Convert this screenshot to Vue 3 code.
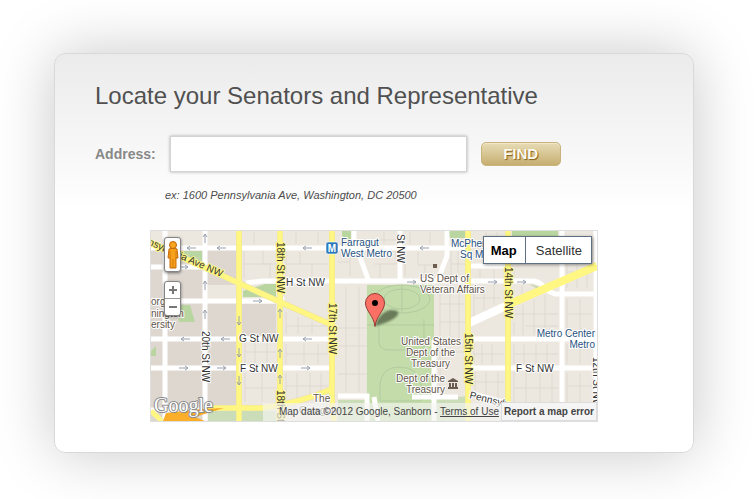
<script setup>
import { ref } from 'vue'

const address = ref('')
const mapType = ref('map')

const whiteRoads = [
  'M165 231V421', 'M205 231V421', 'M400 231V282', 'M354 231V240L369 282',
  'M447 231V256L437 282', 'M562 231V421', 'M596 231V421',
  'M151 248H470', 'M151 267H205', 'M151 301H276L284 298', 'M246 283L262 281H534Q541 282 548 291L555 294H597',
  'M151 339H332', 'M151 368H332', 'M470 339H597', 'M470 368H597',
  'M470 266H508', 'M338 396H367V421', 'M434 340V421', 'M374 397L378 421',
  'M412 397H458', 'M470 393L520 407H597', 'M151 410H212',
]
const yellowRoads = [
  'M239 231V421', 'M280 231V421', 'M332 231V382Q331 398 334 421', 'M468 231V421', 'M508 231V421',
  'M151 243L280 302L332 325', 'M205 408H262Q300 403 332 389',
]
const parcels = [
  'M212 251V278H235', 'M222 251V260H235', 'M178 252V264', 'M188 252V258H200', 'M244 251V278M254 232V244M263 251V264H276M244 264H270V278',
  'M286 252V276M300 252V264H328M312 264V276M286 264H300M318 232V244M296 232V244',
  'M338 251H350V276M338 262H350M346 287V392M338 328H367M338 346H367M338 374H367M359 287V392',
  'M372 251H396V264H374M380 264V278M384 232V244M372 240H396',
  'M405 252V276M418 252V265H438M425 265V278M410 232V244M430 232V244',
  'M451 251V278M458 251V278M451 264H465M440 287V392M450 287V338M459 287V338M440 304H465M440 322H465M440 352H465',
  'M474 286V316M484 286V310M494 270V304M474 298H500M480 270V278M486 232V262M497 232V262',
  'M514 270V278M522 286V296M535 286V290M514 322V335M523 305V335M534 300V335M545 295V335M514 314H558M526 326H558',
  'M474 344V364M482 344V364M492 344V364M474 354H504M514 344V364M524 344V364M536 344V364M547 344V364M514 354H558',
  'M475 372V390M486 372V394M498 372V398M475 382H504M514 372V402M526 372V402M540 372V402M552 372V402M514 388H558',
  'M567 252V288M577 252V288M587 274V288M567 272H592M567 299V335M580 299V335M567 314H592M567 344V364M580 344V364M567 373V402M580 373V402M567 386H592',
  'M245 305V334H276M255 310V334M265 314V334M245 322H276M245 343V363M255 343V363M267 343V363M245 352H276',
  'M286 312V334M298 317V334M312 322V334M286 326H328M286 344V364M304 344V364M318 344V364M286 354H328',
  'M286 373V402M297 373V402M310 373V396M321 373V390M286 386H328M245 373V402M262 373V402M245 388H276',
]
const arrows = [
  [191, 248, 180], [221, 248, 180], [184, 267, 0], [258, 301, 0], [307, 248, 180], [424, 248, 180],
  [412, 282, 0], [493, 282, 0], [522, 282, 0], [185, 339, 180], [225, 339, 180], [184, 368, 0],
  [222, 368, 0], [307, 339, 180], [306, 368, 0], [205, 238, 270], [205, 285, 270], [205, 314, 270],
  [239, 321, 90], [239, 353, 90], [239, 381, 90], [280, 313, 270], [280, 353, 270], [280, 379, 270],
]
</script>

<template>
  <main class="page">
    <section class="card">
      <h1>Locate your Senators and Representative</h1>
      <form class="search" @submit.prevent>
        <label for="address">Address:</label>
        <input id="address" v-model="address" type="text" />
        <button type="submit" class="find">FIND</button>
      </form>
      <p class="hint">ex: 1600 Pennsylvania Ave, Washington, DC 20500</p>

      <div class="map">
        <svg class="tiles" viewBox="151 231 446 190" role="img" aria-label="Street map">
          <rect x="151" y="231" width="446" height="190" fill="#ece7df" />
          <path fill="#ddd7d0" d="M151 248H205V421H151zM205 248H239V285H205zM205 301H239V405H205zM239 304H276V336H239z" />
          <g fill="#b9d6a0">
            <path d="M367 285H434V421H367z" fill="#c3dcaa" />
            <path d="M338 400H365V421H338zM208 411H276V421H208zM434 399L470 396V421H434z" fill="#cbdcb8" />
            <path d="M512 231H558V238H512zM243 297V291L265 284H276V297zM180 251H202V262L180 254zM178 305H190L195 322H179zM151 351L156 346V356H151zM342 231H351V244L342 236zM529 284L550 290H540zM448 231H465V238H450z" />
          </g>
          <path v-for="d in parcels" :key="d" :d="d" class="parcel" />
          <g fill="none" stroke="#b2cb9f">
            <ellipse cx="402" cy="299" rx="28" ry="14" />
            <ellipse cx="402" cy="299" rx="18" ry="10" />
            <path d="M379 319V343Q380 350 390 350H424V319M380 384Q382 367 399 367Q418 367 421 384V401H380zM402 285V312M367 325H434" />
          </g>
          <path v-for="d in whiteRoads" :key="d" :d="d" class="road" />
          <path d="M469 323L508 305" class="road wide" />
          <path v-for="d in yellowRoads" :key="d" :d="d" class="avenue edge" />
          <path v-for="d in yellowRoads" :key="d + 'f'" :d="d" class="avenue" />
          <path d="M507 305L597 266" class="avenue wide" />
          <path d="M151 411L162 421" class="avenue" />
          <path fill="#fbae29" d="M163 421L166 413L201 409L224 408L195 417L205 421z" />
          <path v-for="(a, i) in arrows" :key="i" class="arrow" d="M-5 0H4M1 -2L4 0L1 2" :transform="`translate(${a[0]} ${a[1]}) rotate(${a[2]})`" />

          <g class="street">
            <text class="penn" transform="translate(221 277) rotate(24)" text-anchor="end">nsylvania Ave NW</text>
            <g class="on-yellow">
              <text transform="translate(277 242) rotate(90)">18th St NW</text>
              <text transform="translate(329 303) rotate(90)">17th St NW</text>
              <text transform="translate(465 333) rotate(90)">15th St NW</text>
              <text transform="translate(505 267) rotate(90)">14th St NW</text>
              <text transform="translate(277 390) rotate(90)">18th St</text>
            </g>
            <text transform="translate(202 331) rotate(90)">20th St NW</text>
            <text transform="translate(397 234) rotate(90)">St NW</text>
            <text transform="translate(593 357) rotate(90)">12th St NW</text>
            <text x="286" y="286">H St NW</text>
            <text x="239" y="342">G St NW</text>
            <text x="240" y="372">F St NW</text>
            <text x="516" y="372">F St NW</text>
            <text transform="translate(469 398) rotate(14)">Pennsylvania</text>
          </g>
          <g class="place">
            <text x="151" y="305">org</text>
            <text x="151" y="317">nington</text>
            <text x="151" y="328">ersity</text>
            <text x="420" y="282">US Dept of</text>
            <text x="420" y="293">Veteran Affairs</text>
            <g text-anchor="end">
              <text x="461" y="345">United States</text>
              <text x="455" y="356">Dept of the</text>
              <text x="450" y="367">Treasury</text>
              <text x="445" y="382">Dept of the</text>
              <text x="445" y="393">Treasury</text>
            </g>
            <text x="313" y="402">The</text>
            <text x="299" y="414">Octagon</text>
          </g>
          <g class="metro">
            <text x="341" y="246">Farragut</text>
            <text x="341" y="257">West Metro</text>
            <text x="451" y="247">McPherson</text>
            <text x="460" y="258">Sq Metro</text>
            <text x="595" y="337" text-anchor="end">Metro Center</text>
            <text x="595" y="348" text-anchor="end">Metro</text>
          </g>
          <rect x="326" y="242" width="12" height="12" rx="2" fill="#2b78bd" stroke="#fff" stroke-width=".6" />
          <text x="332" y="252" text-anchor="middle" class="station">M</text>
          <rect x="433" y="264" width="4" height="4" fill="#6d5c50" />
          <path d="M448 381L453 378L458 381V382H448zM449 383H451V387H449zM452 383H454V387H452zM455 383H457V387H455zM448 387H458V389H448z" fill="#6a5c51" />

          <defs>
            <filter id="soft" x="-20%" y="-40%" width="140%" height="180%"><feGaussianBlur stdDeviation="1" /></filter>
          </defs>
          <path d="M375 326Q379 312 391 310Q401 310 397 316Q391 322 375 326z" fill="#344028" fill-opacity=".62" filter="url(#soft)" />
          <path d="M375 326.5C374 316 365.500 311 365.500 303A9.500 9.500 0 0 1 384.500 303C384.500 311 376 316 375 326.500z" fill="#fb7064" stroke="#963a34" />
          <circle cx="375" cy="303" r="3" />
          <text x="154" y="412" class="logo">Google</text>
          <path d="M263 403H597V421H263z" fill="#f5f5f2" fill-opacity=".65" />
        </svg>

        <button type="button" class="control pegman" aria-label="Street View">
          <svg viewBox="0 0 16 32" width="16" height="32">
            <path d="M4 10Q8 8 12 10L13 19H11V29H5V19H3z" fill="#f7a01b" stroke="#c56a08" />
            <path d="M8 20V29M5 12V19M11 12V19" stroke="#c56a08" stroke-width=".7" />
            <circle cx="8" cy="6" r="3.500" fill="#f9a51e" stroke="#b9670b" />
          </svg>
        </button>
        <div class="control zoom">
          <button type="button" aria-label="Zoom in"><svg viewBox="0 0 8 8" width="8" height="8"><path d="M0 4H8M4 0V8" /></svg></button>
          <button type="button" aria-label="Zoom out"><svg viewBox="0 0 8 8" width="8" height="8"><path d="M0 4H8" /></svg></button>
        </div>
        <div class="types">
          <button type="button" :class="{ active: mapType === 'map' }" @click="mapType = 'map'">Map</button>
          <button type="button" :class="{ active: mapType === 'satellite' }" @click="mapType = 'satellite'">Satellite</button>
        </div>
        <div class="credits">
          <span>Map data ©2012 Google, Sanborn - <a href="#">Terms of Use</a></span>
          <a href="#" class="report">Report a map error</a>
        </div>
      </div>
    </section>
  </main>
</template>

<style>
body {
  margin: 0;
  background: #fff;
}
</style>

<style scoped>
.page {
  padding: 53px 61px 46px 54px;
  overflow: hidden;
  font-family: "Liberation Sans", Arial, sans-serif;
}
.card {
  padding: 28px 40px 30px;
  border: 1px solid #d9d9d9;
  border-radius: 11px;
  background: linear-gradient(#ebebeb, #fff 158px);
  box-shadow: 0 0 60px rgba(0, 0, 0, 0.22);
}
h1 {
  margin: 0;
  font-size: 24px;
  line-height: 28px;
  font-weight: 400;
  color: #505050;
}
.search {
  display: flex;
  align-items: center;
  gap: 14px;
  margin-top: 26px;
}
.search label {
  font-size: 14px;
  font-weight: 700;
  color: #888;
}
.search input {
  box-sizing: border-box;
  flex: 0 1 297px;
  min-width: 0;
  height: 36px;
  padding: 0 8px;
  border: 1px solid #d3d3d3;
  background: #fff;
  box-shadow: 0 0 3px rgba(0, 0, 0, 0.3);
  font: 16px "Liberation Sans", Arial, sans-serif;
}
.find {
  flex: none;
  width: 80px;
  height: 24px;
  padding: 0;
  border: 1px solid #c9b27c;
  border-radius: 5px;
  background: linear-gradient(#e8dcb6, #c6ae70);
  box-shadow: inset 0 1px 0 #f1e8cc;
  color: #fbf8ee;
  font: 700 15px/20px "Liberation Sans", Arial, sans-serif;
  text-shadow: 1px 1px 1px #85601c;
}
.hint {
  margin: 16px 0 0 70px;
  font-size: 11px;
  line-height: 14px;
  font-style: italic;
  color: #4c4c4c;
}
.map {
  position: relative;
  box-sizing: border-box;
  max-width: 448px;
  margin: 28px auto 0;
  border: 1px solid #dedede;
  overflow: hidden;
}
.tiles {
  display: block;
  width: 100%;
}
.parcel {
  fill: none;
  stroke: #dcd6cc;
  stroke-width: 0.7;
}
.road {
  fill: none;
  stroke: #fff;
  stroke-width: 5;
}
.avenue {
  fill: none;
  stroke: #fff782;
  stroke-width: 5;
}
.avenue.edge {
  stroke: #eee29a;
  stroke-width: 6;
}
.road.wide,
.avenue.wide {
  stroke-width: 8;
}
.arrow {
  fill: none;
  stroke: #98a1ad;
}
.tiles text {
  font-size: 10px;
  paint-order: stroke;
  stroke: #fff;
  stroke-width: 2px;
  stroke-linejoin: round;
}
.street text {
  fill: #333;
}
.on-yellow text,
.street .penn {
  stroke: #fff782;
}
.place text {
  fill: #615349;
}
.metro text {
  fill: #27517e;
}
.tiles .station {
  fill: #fff;
  stroke: none;
  font-weight: 700;
}
.tiles .logo {
  font-family: "Liberation Serif", serif;
  font-size: 20px;
  fill: #fff;
  stroke: #8c8c8c;
}
.control {
  position: absolute;
  left: 13px;
  box-sizing: border-box;
  width: 17px;
  border: 1px solid #858585;
  border-radius: 3px;
  background: #fff;
  box-shadow: 0 1px 3px rgba(0, 0, 0, 0.5);
}
.pegman {
  display: flex;
  align-items: center;
  justify-content: center;
  top: 6px;
  height: 35px;
  padding: 0;
}
.pegman svg {
  flex: none;
}
.zoom {
  display: grid;
  top: 50px;
  height: 35px;
}
.zoom button {
  display: flex;
  align-items: center;
  justify-content: center;
  padding: 0;
  border: 0;
  background: none;
}
.zoom button + button {
  border-top: 1px solid #999;
}
.zoom path {
  fill: none;
  stroke: #777;
  stroke-width: 2;
}
.types {
  position: absolute;
  top: 5px;
  right: 5px;
  display: flex;
  border: 1px solid #5f7084;
  background: #fff;
  box-shadow: 1px 1px 3px rgba(0, 0, 0, 0.4);
}
.types button {
  height: 26px;
  padding: 0 9px 0 10px;
  border: 0;
  background: none;
  color: #333;
  font: 13px "Liberation Sans", Arial, sans-serif;
}
.types button:first-child {
  padding: 0 8px 0 7px;
}
.types button + button {
  border-left: 1px solid #5f7084;
}
.types .active {
  color: #000;
  font-weight: 700;
}
.credits {
  position: absolute;
  right: 0;
  bottom: 0;
  display: flex;
  align-items: center;
  gap: 2px;
  font-size: 10px;
  line-height: 17px;
  color: #444;
  white-space: nowrap;
}
.credits a {
  color: #444;
}
.credits .report {
  padding: 0 2px;
  border: 1px solid #dcdcdc;
  background: #f5f5f5;
  font-weight: 700;
  text-decoration: none;
}
</style>
